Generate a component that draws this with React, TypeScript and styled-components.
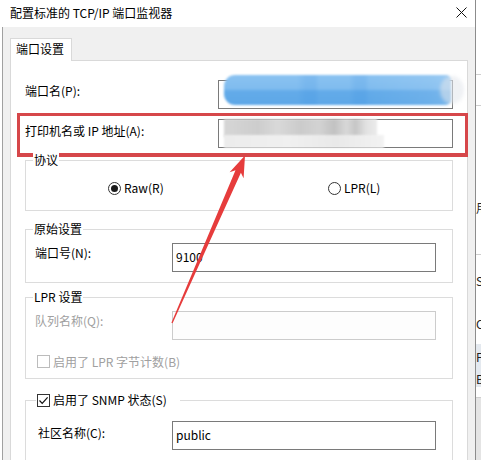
import React from 'react';
import styled, { createGlobalStyle } from 'styled-components';

const GlobalStyle = createGlobalStyle`
  html, body { margin: 0; padding: 0; background: #fff; }
  body {
    font-family: "Noto Sans CJK SC", "Noto Sans", sans-serif;
    font-size: 12px;
    color: #000;
  }
  * { box-sizing: border-box; }
`;

const Screen = styled.div`
  position: relative;
  width: 481px;
  height: 460px;
  overflow: hidden;
  display: flex;
  background: #fff;
`;

const Dialog = styled.div`
  width: 476px;
  flex: none;
  display: flex;
  flex-direction: column;
  border-right: 1px solid #8c8c8c;
  background: #fff;
`;

const TitleBar = styled.div`
  height: 27px;
  flex: none;
  display: flex;
  align-items: center;
  justify-content: space-between;
  padding: 0 8px 2px 10px;
  font-size: 12px;
  line-height: 16px;
  color: #000;
`;

const Body = styled.div`
  flex: 1;
  margin-left: 2px;
  border-left: 1px solid #a0a0a0;
  background: #f0f0f0;
  padding: 11px 7px 0 7px;
  display: flex;
  flex-direction: column;
`;

const TabStrip = styled.div`
  display: flex;
  flex: none;
`;

const Tab = styled.div`
  position: relative;
  z-index: 1;
  width: 62px;
  height: 23px;
  margin-bottom: -1px;
  padding: 0 0 3px 5px;
  display: flex;
  align-items: center;
  background: #fff;
  border: 1px solid #d9d9d9;
  border-bottom: none;
  line-height: 16px;
`;

const Panel = styled.div`
  flex: 1;
  display: flex;
  flex-direction: column;
  background: #fff;
  border: 1px solid #d9d9d9;
  border-bottom: none;
  padding: 19px 14px 0 14px;
`;

const Row = styled.div<{ $mt?: number; $cols: number }>`
  position: relative;
  display: grid;
  grid-template-columns: ${(p) => p.$cols}px 1fr;
  align-items: start;
  margin-top: ${(p) => p.$mt ?? 0}px;
  flex: none;
`;

const Label = styled.div<{ $muted?: boolean; $pt?: number }>`
  padding-top: ${(p) => p.$pt ?? 3}px;
  line-height: 16px;
  white-space: nowrap;
  color: ${(p) => (p.$muted ? '#a0a0a0' : '#000')};
`;

const Field = styled.div<{ $disabled?: boolean }>`
  position: relative;
  height: 29px;
  border: 1px solid ${(p) => (p.$disabled ? '#cccccc' : '#7a7a7a')};
  background: ${(p) => (p.$disabled ? '#fdfdfd' : '#fff')};
  display: flex;
  align-items: center;
  padding: 0 0 2px 3px;
  line-height: 16px;
  font-size: 12px;
`;

const BlueBlur = styled.div`
  position: absolute;
  left: 5px;
  top: -6px;
  right: 1px;
  height: 30px;
  border-radius: 11px 5px 5px 11px;
  background:
    linear-gradient(90deg, rgba(255,255,255,0) 0%, rgba(255,255,255,0) 32%, rgba(40,130,220,0.12) 36%, rgba(40,130,220,0.12) 40%, rgba(255,255,255,0) 42%, rgba(255,255,255,0) 55%, rgba(40,130,220,0.12) 58%, rgba(40,130,220,0.12) 62%, rgba(255,255,255,0) 64%, rgba(255,255,255,0.08) 90%, rgba(255,255,255,0.15) 100%),
    linear-gradient(180deg, #8ac2f1 0%, #80bcef 45%, #63abe9 55%, #5ea8e8 100%);
  filter: blur(0.8px);
  &::after {
    content: '';
    position: absolute;
    right: -13px;
    top: 1px;
    width: 24px;
    height: 28px;
    border-radius: 50%;
    background: rgba(225, 230, 235, 0.55);
    filter: blur(1.5px);
    z-index: -1;
  }
`;

const GreyBlur = styled.div<{ $top: number; $h: number; $w: number; $light?: boolean }>`
  position: absolute;
  left: 5px;
  top: ${(p) => p.$top}px;
  width: ${(p) => p.$w}px;
  height: ${(p) => p.$h}px;
  background: ${(p) =>
    p.$light
      ? 'linear-gradient(90deg, #ececec 0%, #f0f0f0 40%, #e9e9e9 70%, #f2f2f2 100%)'
      : 'linear-gradient(90deg, #d6d6d6 0%, #cdcdcd 22%, #d9d9d9 35%, #cbcbcb 50%, #d3d3d3 62%, #c2c2c2 72%, #d8d8d8 80%, #c6c6c6 86%, #e2e2e2 93%, #ebebeb 100%)'};
  filter: blur(0.8px);
`;

const RedFrame = styled.div`
  position: absolute;
  left: -8px;
  top: -6px;
  right: -15px;
  bottom: -9px;
  border: 3px solid #d6474a;
  border-bottom-width: 4px;
  pointer-events: none;
`;

const Group = styled.div<{ $mt: number; $pt: number; $pl?: number }>`
  position: relative;
  flex: none;
  margin-top: ${(p) => p.$mt}px;
  border: 1px solid #dcdcdc;
  padding: ${(p) => p.$pt}px 16px 10px ${(p) => p.$pl ?? 9}px;
  display: flex;
  flex-direction: column;
`;

const Legend = styled.div<{ $left?: number; $pr?: number }>`
  position: absolute;
  top: -9px;
  left: ${(p) => p.$left ?? 7}px;
  padding: 0 ${(p) => p.$pr ?? 1}px 0 1px;
  background: #fff;
  line-height: 16px;
  display: flex;
  align-items: center;
  gap: 3px;
  white-space: nowrap;
`;

const RadioRow = styled.div`
  height: 39px;
  display: grid;
  grid-template-columns: 220px auto;
  align-items: center;
  padding: 15px 0 0 73px;
`;

const Choice = styled.label`
  display: flex;
  align-items: center;
  gap: 3px;
  line-height: 16px;
  white-space: nowrap;
`;

const RadioDot = styled.span<{ $on?: boolean }>`
  width: 13px;
  height: 13px;
  border-radius: 50%;
  border: 1px solid #333;
  background: #fff;
  display: flex;
  align-items: center;
  justify-content: center;
  &::after {
    content: '';
    width: 7px;
    height: 7px;
    border-radius: 50%;
    background: ${(p) => (p.$on ? '#1a1a1a' : 'transparent')};
  }
`;

const CheckBox = styled.span<{ $disabled?: boolean }>`
  width: 13px;
  height: 13px;
  flex: none;
  border: 1px solid ${(p) => (p.$disabled ? '#bcbcbc' : '#333')};
  background: #fff;
  display: flex;
  align-items: center;
  justify-content: center;
`;

const CheckRow = styled.div<{ $muted?: boolean }>`
  margin-top: 15px;
  margin-left: 2px;
  height: 13px;
  display: flex;
  align-items: center;
  gap: 3px;
  line-height: 16px;
  color: ${(p) => (p.$muted ? '#a0a0a0' : '#000')};
`;

const BgStrip = styled.div`
  flex: 1;
  display: flex;
  flex-direction: column;
  overflow: hidden;
  background: #fff;
`;

const StripCell = styled.div<{ $h: number; $bg?: string; $line?: boolean }>`
  height: ${(p) => p.$h}px;
  flex: none;
  background: ${(p) => p.$bg ?? 'transparent'};
  border-bottom: ${(p) => (p.$line ? '1px solid #cfcfcf' : 'none')};
  font-size: 12px;
  line-height: 16px;
  white-space: nowrap;
  color: #222;
  display: flex;
  align-items: flex-end;
`;

const Overlay = styled.svg`
  position: absolute;
  left: 0;
  top: 0;
  pointer-events: none;
`;

const CloseIcon = () => (
  <svg width="11" height="11" viewBox="0 0 11 11">
    <path d="M0.5 0.5 L10.5 10.5 M10.5 0.5 L0.5 10.5" stroke="#111" strokeWidth="1" fill="none" />
  </svg>
);

const Tick = () => (
  <svg width="11" height="11" viewBox="0 0 11 11">
    <path d="M1.5 5.5 L4.2 8.3 L9.6 2.4" stroke="#111" strokeWidth="1.2" fill="none" />
  </svg>
);

export default function App() {
  return (
    <>
      <GlobalStyle />
      <Screen>
        <Dialog>
          <TitleBar>
            <span>配置标准的 TCP/IP 端口监视器</span>
            <CloseIcon />
          </TitleBar>
          <Body>
            <TabStrip>
              <Tab>端口设置</Tab>
            </TabStrip>
            <Panel>
              <Row $cols={193}>
                <Label $pt={3}>端口名(P):</Label>
                <Field>
                  <BlueBlur />
                </Field>
              </Row>
              <Row $cols={193} $mt={10}>
                <Label $pt={4}>打印机名或 IP 地址(A):</Label>
                <Field>
                  <GreyBlur $top={-1} $h={18} $w={153} />
                  <GreyBlur $top={15} $h={13} $w={160} $light />
                </Field>
                <RedFrame />
              </Row>

              <Group $mt={12} $pt={0}>
                <Legend>协议</Legend>
                <RadioRow>
                  <Choice>
                    <RadioDot $on />
                    Raw(R)
                  </Choice>
                  <Choice>
                    <RadioDot />
                    LPR(L)
                  </Choice>
                </RadioRow>
              </Group>

              <Group $mt={18} $pt={13}>
                <Legend>原始设置</Legend>
                <Row $cols={137}>
                  <Label $pt={2}>端口号(N):</Label>
                  <Field>9100</Field>
                </Row>
              </Group>

              <Group $mt={14} $pt={13}>
                <Legend>LPR 设置</Legend>
                <Row $cols={137}>
                  <Label $pt={2} $muted>
                    队列名称(Q):
                  </Label>
                  <Field $disabled />
                </Row>
                <CheckRow $muted>
                  <CheckBox $disabled />
                  启用了 LPR 字节计数(B)
                </CheckRow>
              </Group>

              <Group $mt={21} $pt={20} $pl={12}>
                <Legend $left={10} $pr={13}>
                  <CheckBox>
                    <Tick />
                  </CheckBox>
                  启用了 SNMP 状态(S)
                </Legend>
                <Row $cols={134}>
                  <Label $pt={4}>社区名称(C):</Label>
                  <Field>public</Field>
                </Row>
              </Group>
            </Panel>
          </Body>
        </Dialog>
        <BgStrip>
          <StripCell $h={75} $line />
          <StripCell $h={31} $line />
          <StripCell $h={110}>用</StripCell>
          <StripCell $h={39} $line />
          <StripCell $h={34}>S</StripCell>
          <StripCell $h={43}>C</StripCell>
          <StripCell $h={12} />
          <StripCell $h={21} $bg="#e4e9ef">F</StripCell>
          <StripCell $h={22} $bg="#e4e9ef">B</StripCell>
          <StripCell $h={11} $line />
          <StripCell $h={62} $bg="#e4e4e4" />
        </BgStrip>
        <Overlay width="481" height="460" viewBox="0 0 481 460">
          <polygon
            points="245,155.5 243.6,178.3 240.9,172.7 172.6,323.2 171.4,322.8 235.5,170.3 229.6,172.2"
            fill="#e63c3c"
          />
        </Overlay>
      </Screen>
    </>
  );
}
